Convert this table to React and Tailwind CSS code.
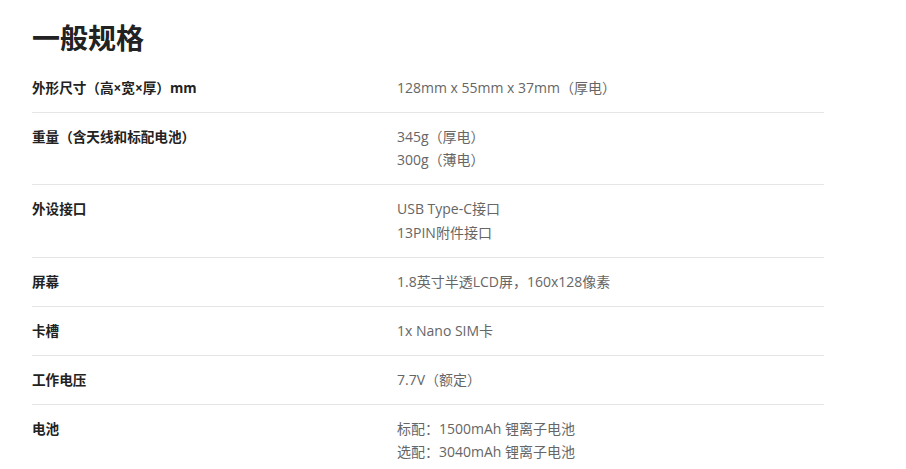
const specs = [
  { label: '外形尺寸（高×宽×厚）mm', values: ['128mm x 55mm x 37mm（厚电）'] },
  { label: '重量（含天线和标配电池）', values: ['345g（厚电）', '300g（薄电）'] },
  { label: '外设接口', values: ['USB Type-C接口', '13PIN附件接口'] },
  { label: '屏幕', values: ['1.8英寸半透LCD屏，160x128像素'] },
  { label: '卡槽', values: ['1x Nano SIM卡'] },
  { label: '工作电压', values: ['7.7V（额定）'] },
  { label: '电池', values: ['标配：1500mAh 锂离子电池', '选配：3040mAh 锂离子电池'] },
];

export default function App() {
  return (
    <div className="min-h-screen bg-white font-['Open_Sans','Noto_Sans_CJK_SC',sans-serif]">
      <div className="w-[792px] ml-8">
        <h1 className="h-[63.5px] pt-[18px] text-[28px] leading-[40px] font-bold text-[#222]">一般规格</h1>
        {specs.map((row, i) => (
          <div
            key={row.label}
            className={`grid grid-cols-[365px_1fr] py-[12.25px] ${i < specs.length - 1 ? 'border-b border-[#e5e5e5]' : ''}`}
          >
            <div className="text-[13.6px] leading-[23.5px] font-bold text-[#222]">{row.label}</div>
            <div className="text-[14px] leading-[23.5px] text-[#666]">
              {row.values.map((v) => (
                <div key={v}>{v}</div>
              ))}
            </div>
          </div>
        ))}
      </div>
    </div>
  );
}
